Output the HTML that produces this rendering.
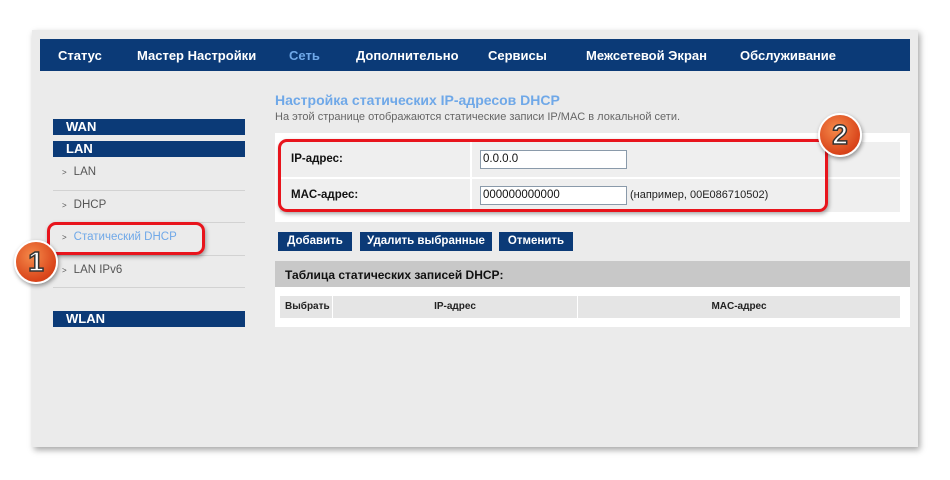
<!DOCTYPE html>
<html><head><meta charset="utf-8"><style>
*{margin:0;padding:0;box-sizing:border-box}
body{width:950px;height:480px;background:#fff;position:relative;overflow:hidden;font-family:"Liberation Sans",Arial,sans-serif}
.a{position:absolute}
.panel{left:32px;top:30px;width:886px;height:417px;background:#ebebeb;box-shadow:2px 3px 6px rgba(0,0,0,.35)}
.nav{left:40px;top:39px;width:870px;height:32px;background:#0b3a77;color:#fff;font-weight:bold;font-size:13px}
.nav span{position:absolute;top:9px}
.bar{background:#0b3a77;color:#fff;font-weight:bold;font-size:13px;left:53px;width:192px;height:16px;padding-left:13px;line-height:16px}
.item{left:62px;font-size:11.5px;color:#555}
.item b{font-weight:normal;font-size:8px;margin-right:7px}
.sep{left:53px;width:192px;height:1px;background:#d2d2d2}
.btn{top:232px;height:19px;background:#0b3a77;color:#fff;font-weight:bold;font-size:11.5px;text-align:center;line-height:19px}
.inp{left:480px;width:147px;height:19px;background:#fff;border:1px solid #8a9aaa;font-size:11.5px;padding-left:2px;line-height:17px;color:#111}
.lbl{left:291px;font-size:11.5px;font-weight:bold;color:#111}
.circ{width:44px;height:44px;border-radius:50%;background:radial-gradient(circle at 40% 35%,#f58a4a,#d9441a 70%,#b8330f);border:2px solid #fff;box-shadow:1px 2px 4px rgba(0,0,0,.4);color:#fff;font-weight:bold;font-size:28px;text-align:center;line-height:40px;-webkit-text-stroke:1.5px #333}
.red{border:3px solid #e8141c;border-radius:9px;box-shadow:1px 2px 4px rgba(0,0,0,.35)}
</style></head><body>
<div class="a panel"></div>
<div class="a nav">
<span style="left:18px">Статус</span><span style="left:97px">Мастер Настройки</span><span style="left:249px;color:#6fa8e8">Сеть</span><span style="left:316px">Дополнительно</span><span style="left:448px">Сервисы</span><span style="left:546px">Межсетевой Экран</span><span style="left:700px">Обслуживание</span>
</div>
<div class="a bar" style="top:119px">WAN</div>
<div class="a bar" style="top:141px">LAN</div>
<div class="a item" style="top:166px"><b>&gt;</b>LAN</div>
<div class="a sep" style="top:190px"></div>
<div class="a item" style="top:199px"><b>&gt;</b>DHCP</div>
<div class="a sep" style="top:222px"></div>
<div class="a item" style="top:231px;color:#6fa8e8"><b style="color:#555">&gt;</b>Статический DHCP</div>
<div class="a sep" style="top:255px"></div>
<div class="a item" style="top:264px"><b>&gt;</b>LAN IPv6</div>
<div class="a sep" style="top:287px"></div>
<div class="a bar" style="top:311px">WLAN</div>

<div class="a" style="left:275px;top:92px;font-size:14px;font-weight:bold;color:#6fa8e8">Настройка статических IP-адресов DHCP</div>
<div class="a" style="left:275px;top:111px;font-size:11px;color:#666">На этой странице отображаются статические записи IP/MAC в локальной сети.</div>
<div class="a" style="left:275px;top:133px;width:635px;height:89px;background:#fff"></div>
<div class="a" style="left:280px;top:142px;width:620px;height:35px;background:#efefef"></div>
<div class="a" style="left:280px;top:179px;width:620px;height:33px;background:#efefef"></div>
<div class="a" style="left:470px;top:142px;width:2px;height:70px;background:#fff"></div>
<div class="a lbl" style="top:153px">IP-адрес:</div>
<div class="a lbl" style="top:189px">MAC-адрес:</div>
<div class="a inp" style="top:150px">0.0.0.0</div>
<div class="a inp" style="top:186px">000000000000</div>
<div class="a" style="left:630px;top:189px;font-size:11px;color:#222">(например, 00E086710502)</div>

<div class="a btn" style="left:278px;width:74px">Добавить</div>
<div class="a btn" style="left:360px;width:132px">Удалить выбранные</div>
<div class="a btn" style="left:499px;width:74px">Отменить</div>

<div class="a" style="left:275px;top:261px;width:635px;height:26px;background:#c8c8c8;font-size:12px;font-weight:bold;color:#111;padding:7px 0 0 10px">Таблица статических записей DHCP:</div>
<div class="a" style="left:275px;top:287px;width:635px;height:40px;background:#fff"></div>
<div class="a" style="left:280px;top:296px;width:52px;height:22px;background:#e5e5e5;font-size:10px;font-weight:bold;color:#222;line-height:22px;padding-left:5px">Выбрать</div>
<div class="a" style="left:333px;top:296px;width:244px;height:22px;background:#e5e5e5;font-size:10px;font-weight:bold;color:#222;line-height:22px;text-align:center">IP-адрес</div>
<div class="a" style="left:578px;top:296px;width:322px;height:22px;background:#e5e5e5;font-size:10px;font-weight:bold;color:#222;line-height:22px;text-align:center">MAC-адрес</div>

<div class="a red" style="left:47px;top:222px;width:158px;height:33px"></div>
<div class="a red" style="left:278px;top:139px;width:550px;height:73px"></div>
<div class="a circ" style="left:14px;top:240px">1</div>
<div class="a circ" style="left:818px;top:113px">2</div>
</body></html>
